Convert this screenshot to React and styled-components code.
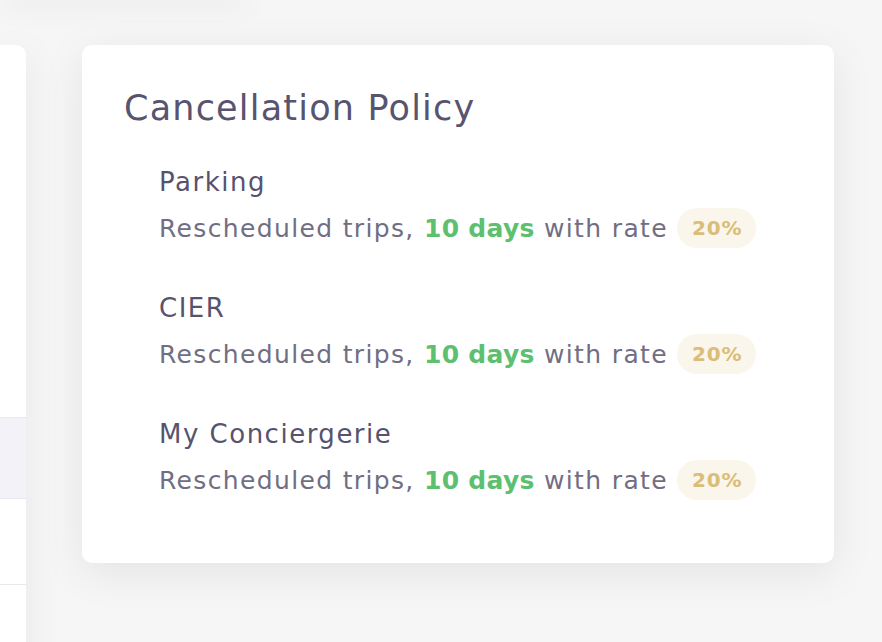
import React from 'react'
import styled, { createGlobalStyle } from 'styled-components'

const GlobalStyle = createGlobalStyle`
  html, body {
    margin: 0;
    padding: 0;
    background: #f6f6f6;
    font-family: "DejaVu Sans", "Open Sans", sans-serif;
    overflow: hidden;
  }
`

const Page = styled.div`
  position: relative;
  width: 882px;
  height: 642px;
  overflow: hidden;
`

const TopCard = styled.div`
  width: 250px;
  height: 12px;
  margin-top: -12px;
  background: #ffffff;
  border-radius: 0 0 10px 10px;
  box-shadow: 0 6px 30px rgba(0, 0, 0, 0.07);
`

const Layout = styled.div`
  display: flex;
  align-items: flex-start;
  gap: 56px;
  padding-top: 45px;
`

const SideCard = styled.div`
  flex-shrink: 0;
  width: 26px;
  height: 640px;
  background: #ffffff;
  border-top-right-radius: 10px;
  box-shadow: 0 8px 40px rgba(0, 0, 0, 0.07);
  display: flex;
  flex-direction: column;
  padding-top: 372px;
  box-sizing: border-box;
`

const SideRow = styled.div`
  height: ${p => p.$h}px;
  background: ${p => (p.$active ? '#f3f2f8' : '#ffffff')};
  border-top: ${p => (p.$active ? '1px solid #e9e8ef' : 'none')};
  border-bottom: 1px solid #e9e8ef;
`

const Card = styled.section`
  width: 752px;
  box-sizing: border-box;
  background: #ffffff;
  border-radius: 10px;
  box-shadow: 0 10px 44px rgba(0, 0, 0, 0.08);
  padding: 39px 42px 60px;
`

const Title = styled.h2`
  margin: 0;
  font-size: 35px;
  line-height: 48px;
  font-weight: 400;
  letter-spacing: 1.2px;
  color: #58546f;
`

const List = styled.div`
  display: flex;
  flex-direction: column;
  gap: 39px;
  margin-top: 32px;
  padding-left: 35px;
`

const Item = styled.div`
  display: flex;
  flex-direction: column;
  gap: 5px;
`

const ItemTitle = styled.h3`
  margin: 0;
  font-size: 26px;
  line-height: 36px;
  font-weight: 400;
  letter-spacing: 1.5px;
  color: #57536e;
`

const Desc = styled.div`
  display: flex;
  align-items: center;
  height: 46px;
  font-size: 25px;
  letter-spacing: 1.35px;
  color: #716e83;
  white-space: pre;
`

const Days = styled.span`
  color: #5dbf70;
  font-weight: 700;
  letter-spacing: 0.3px;
`

const Badge = styled.span`
  display: inline-flex;
  align-items: center;
  justify-content: center;
  height: 40px;
  padding: 0 14px 0 15px;
  margin-left: 9px;
  border-radius: 20px;
  background: #faf6ec;
  color: #d9bd78;
  font-size: 20px;
  font-weight: 700;
  letter-spacing: 0.8px;
`

const policies = [
  { name: 'Parking', days: '10 days', rate: '20%' },
  { name: 'CIER', days: '10 days', rate: '20%' },
  { name: 'My Conciergerie', days: '10 days', rate: '20%' },
]

export default function App() {
  return (
    <Page>
      <GlobalStyle />
      <TopCard />
      <Layout>
        <SideCard>
          <SideRow $active $h={80} />
          <SideRow $h={85} />
        </SideCard>
        <Card>
          <Title>Cancellation Policy</Title>
          <List>
            {policies.map(p => (
              <Item key={p.name}>
                <ItemTitle>{p.name}</ItemTitle>
                <Desc>
                  Rescheduled trips, <Days>{p.days}</Days> with rate
                  <Badge>{p.rate}</Badge>
                </Desc>
              </Item>
            ))}
          </List>
        </Card>
      </Layout>
    </Page>
  )
}
